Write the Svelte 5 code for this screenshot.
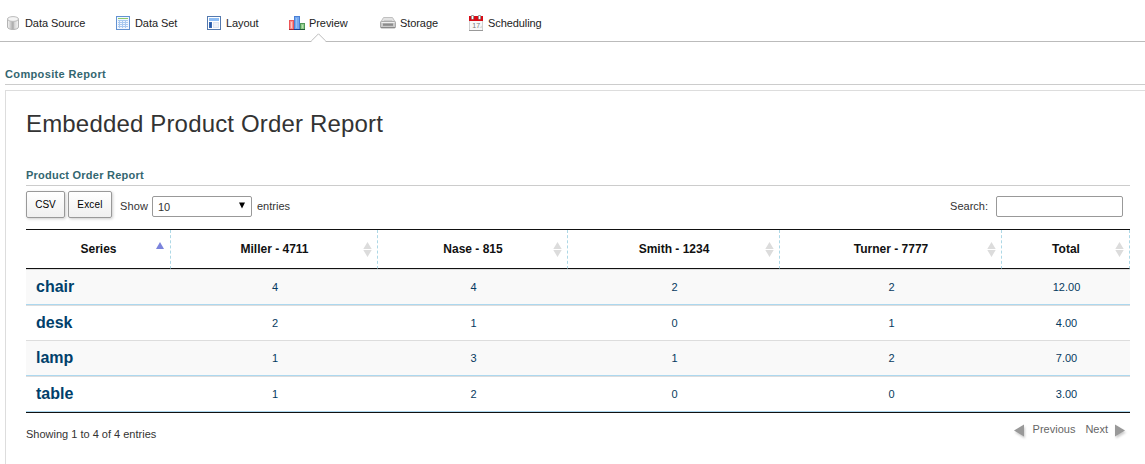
<script>
  const columns = ['Series', 'Miller - 4711', 'Nase - 815', 'Smith - 1234', 'Turner - 7777', 'Total'];
  const widths = [145, 207, 190, 212, 222, 128];
  const rows = [
    ['chair', '4', '4', '2', '2', '12.00'],
    ['desk', '2', '1', '0', '1', '4.00'],
    ['lamp', '1', '3', '1', '2', '7.00'],
    ['table', '1', '2', '0', '0', '3.00']
  ];
</script>

<nav>
  <a class="source">
    <svg width="14" height="14" viewBox="0 0 14 14">
      <defs><linearGradient id="cyl"><stop offset="0" stop-color="#fafafa"/><stop offset=".25" stop-color="#d0d0d0"/><stop offset=".5" stop-color="#a8a8a8"/><stop offset=".65" stop-color="#d8d8d8"/><stop offset="1" stop-color="#f5f5f5"/></linearGradient></defs>
      <path d="M1.500 3v8c0 1.500 2.500 2.500 5.500 2.500s5.500-1 5.500-2.500V3z" fill="url(#cyl)" stroke="#b4b4b4"/>
      <ellipse cx="7" cy="3" rx="5.500" ry="2.400" fill="#f4f4f4" stroke="#bbb"/>
    </svg><span>Data Source</span>
  </a>
  <a class="set">
    <svg width="14" height="14" viewBox="0 0 14 14" shape-rendering="crispEdges">
      <rect x=".5" y=".5" width="13" height="13" fill="#f2f7fe" stroke="#6292d2"/>
      <path d="M2 2.500h10" stroke="#8cca6c"/>
      <path d="M2 4.500h10M2 6.500h10M2 8.500h10M2 10.500h10M3.500 4v8M6.500 4v8M9.500 4v8" stroke="#a9c9f0"/>
    </svg><span>Data Set</span>
  </a>
  <a class="layout">
    <svg width="14" height="14" viewBox="0 0 14 14" shape-rendering="crispEdges">
      <rect x=".5" y=".5" width="13" height="13" fill="#fff" stroke="#5479ae"/>
      <path d="M2 2h10v3H2z" fill="#8dbdf5"/><path d="M2 6h3v6H2z" fill="#3768b1"/><path d="M3 7h1v4H3z" fill="#2859a8"/><path d="M6 6h6v6H6z" fill="#dce4f1"/><path d="M7 7h4v4H7z" fill="#edf1f8"/>
    </svg><span>Layout</span>
  </a>
  <a class="preview">
    <svg width="16" height="14" viewBox="0 0 16 14" shape-rendering="crispEdges">
      <path d="M.5 4.500h4v9h-4z" fill="#f88f8f" stroke="#ee5558"/><path d="M2.500 6v6" stroke="#ffc5c0"/>
      <path d="M5.500.5h5v13h-5z" fill="#75a9ef" stroke="#4a80d6"/><path d="M7.500 2v10" stroke="#94c0fa"/>
      <path d="M11.500 7.500h4v6h-4z" fill="#91cb8c" stroke="#4e9858"/><path d="M13.500 9v3" stroke="#b6e3ad"/>
      <path d="M0 13.500h5" stroke="#a52c35"/><path d="M5 13.500h6" stroke="#183d91"/><path d="M11 13.500h5" stroke="#235b35"/>
    </svg><span>Preview</span>
    <svg class="notch" width="15" height="9" viewBox="0 0 15 9"><path d="M0 9 7.500 1 15 9z" fill="#fff"/><path d="M.5 7.800 7.500 .8l7 7" fill="none" stroke="#bbb"/></svg>
  </a>
  <a class="storage">
    <svg width="16" height="12" viewBox="0 0 16 12">
      <path d="M3.500.5h9l3 5v1H.5v-1z" fill="#e2e2e2" stroke="#c0c0c0"/>
      <rect x=".5" y="4.500" width="15" height="6.500" rx="1" fill="#cacaca" stroke="#aaa"/>
      <path d="M1.500 5.500h13" stroke="#f0f0f0"/><path d="M3 6.500h10v2.300H3z" fill="#8c8c8c"/><path d="M1 10.500h14" stroke="#8a8a8a"/><path d="M4 3.500h8" stroke="#ccc"/>
    </svg><span>Storage</span>
  </a>
  <a class="schedule">
    <svg width="14" height="16" viewBox="0 0 14 16">
      <path d="M.5 5.500h13v10H.5z" fill="#f8f8f8" stroke="#d0d0d0"/><path d="M0 1h14v5H0z" fill="#d80c16"/><path d="M0 15.500h14" stroke="#999"/>
      <rect x="2" y="0" width="3" height="4.500" rx="1" fill="#999"/><rect x="9" y="0" width="3" height="4.500" rx="1" fill="#999"/>
      <path d="M3 1h1v3H3zM10 1h1v3h-1z" fill="#fff"/>
      <text x="3.300" y="12.500">17</text><path d="m10 13 3-2.500V13z" fill="#ddd"/>
    </svg><span>Scheduling</span>
  </a>
</nav>

<main>
  <h2 class="outer">Composite Report</h2>
  <section class="panel">
    <h1>Embedded Product Order Report</h1>
    <h2>Product Order Report</h2>
    <div class="controls">
      <button>CSV</button><button class="excel">Excel</button>
      <span class="show">Show</span>
      <div class="select"><span>10</span><svg width="6" height="7" viewBox="0 0 6 7"><path d="M0 .5h6l-3 6z" fill="#000"/></svg></div>
      <span class="entries">entries</span>
      <label for="q">Search:</label><input id="q" />
    </div>
    <table>
      <colgroup>{#each widths as w}<col style="width:{w}px" />{/each}</colgroup>
      <thead>
        <tr>
          {#each columns as c, i}
            <th><div class="head"><span>{c}</span>
              {#if i === 0}
                <svg class="sort first" width="8" height="7" viewBox="0 0 8 7"><path d="m4 0 4 7H0z" fill="#7b83dc"/></svg>
              {:else}
                <svg class="sort" width="9" height="15" viewBox="0 0 9 15"><path d="M4.500 0 8.700 7H.3zM.3 8h8.400l-4.200 7z" fill="#dcdcdc"/></svg>
              {/if}
            </div></th>
          {/each}
        </tr>
      </thead>
      <tbody>
        {#each rows as row}
          <tr>{#each row as cell}<td><span>{cell}</span></td>{/each}</tr>
        {/each}
      </tbody>
    </table>
    <footer>
      <span class="info">Showing 1 to 4 of 4 entries</span>
      <svg class="arrow" width="13" height="15" viewBox="0 0 13 15"><path d="M1 6.500 11 .5v12z" fill="#999"/></svg>
      <span class="prev">Previous</span><span class="next">Next</span>
      <svg class="arrow" width="13" height="15" viewBox="0 0 13 15"><path d="M11 6.500 1 .5v12z" fill="#999"/></svg>
    </footer>
  </section>
</main>

<style>
  :global(body) { background: #fff; font: 11px/14px "Liberation Sans", Arial, sans-serif; color: #333; }
  svg { display: block; flex: none; }
  nav { display: flex; height: 41px; border-bottom: 1px solid #bbb; padding-left: 6px; box-sizing: content-box; }
  nav a { display: flex; align-items: center; height: 46px; position: relative; color: #222; white-space: nowrap; }
  nav a > span { line-height: 14px; letter-spacing: -.08px; }
  .source { width: 110px; gap: 5px; }
  .set { width: 91px; gap: 5px; }
  .layout { width: 82px; gap: 5px; }
  .preview { width: 91px; gap: 4px; }
  .storage { width: 89px; gap: 4px; }
  .schedule { gap: 5px; }
  .schedule text { font: 7px "Liberation Sans", sans-serif; fill: #777; }
  .notch { position: absolute; left: 22px; top: 33px; }
  main { padding: 25px 0 0 5px; }
  h2 { font-size: 11px; line-height: 14px; color: #336670; margin: 0; height: 17px; border-bottom: 1px solid #ccc; letter-spacing: .24px; }
  .outer { margin-bottom: 5px; letter-spacing: .36px; }
  .panel { box-sizing: border-box; border: 1px solid #ddd; border-width: 1px 0 0 1px; height: 374px; padding: 0 15px 0 20px; }
  h1 { font-size: 24px; font-weight: 400; line-height: 28px; margin: 19px 0 30px; color: #333; letter-spacing: .17px; }
  .controls { display: flex; align-items: center; height: 43px; box-sizing: border-box; padding: 0 7px 3px 0; }
  button { box-sizing: border-box; height: 27px; width: 39px; margin: -3px 3px 0 0; padding: 0; border: 1px solid #999; border-radius: 2px; background: linear-gradient(#fff, #f0f0f0); box-shadow: 1px 1px 3px #ccc; font: 10px "Liberation Sans", sans-serif; color: #000; }
  .excel { width: 44px; letter-spacing: .2px; }
  .show { margin-left: 5px; width: 32px; letter-spacing: .15px; }
  .select { display: flex; align-items: center; justify-content: space-between; box-sizing: border-box; width: 100px; height: 21px; border: 1px solid #999; border-radius: 2px; padding: 2px 6px 0 5px; }
  .select svg { margin-top: -3px; }
  .entries { margin-left: 5px; }
  .controls label { margin-left: auto; }
  input { box-sizing: border-box; width: 127px; height: 21px; border: 1px solid #999; border-radius: 2px; margin: 0 0 0 8px; padding: 0; }
  table { width: 1104px; table-layout: fixed; border-collapse: separate; border-spacing: 0; border-top: 1px solid #111; border-bottom: 1px solid #111; }
  th, td { padding: 0 0 0 1px; box-sizing: border-box; text-align: center; }
  th { height: 39px; border-bottom: 1px solid #111; border-right: 1px dashed #add8e6; font-size: 12px; line-height: 14px; color: #111; }
  .head { position: relative; }
  .sort { position: absolute; right: 5px; top: 0; }
  .first { right: 6px; }
  td { height: 36px; border-top: 1px solid #ddd; border-bottom: 1px solid #add8ef; color: #063a60; line-height: 16px; }
  tr:nth-child(2) td { height: 35px; border-bottom: 0; }
  tbody tr:nth-child(odd) { background: #f9f9f9; }
  td:first-child { font-size: 16px; font-weight: 700; text-align: left; padding-left: 10px; color: #00406b; }
  footer { display: flex; padding: 9px 3px 0 0; color: #666; }
  .info { margin: 5px auto 0 0; color: #333; }
  .arrow { margin-top: 2px; filter: drop-shadow(1px 2px 1px #ccc); }
  .prev { margin: 0 10px 0 7px; }
  .next { margin-right: 6px; }
</style>
